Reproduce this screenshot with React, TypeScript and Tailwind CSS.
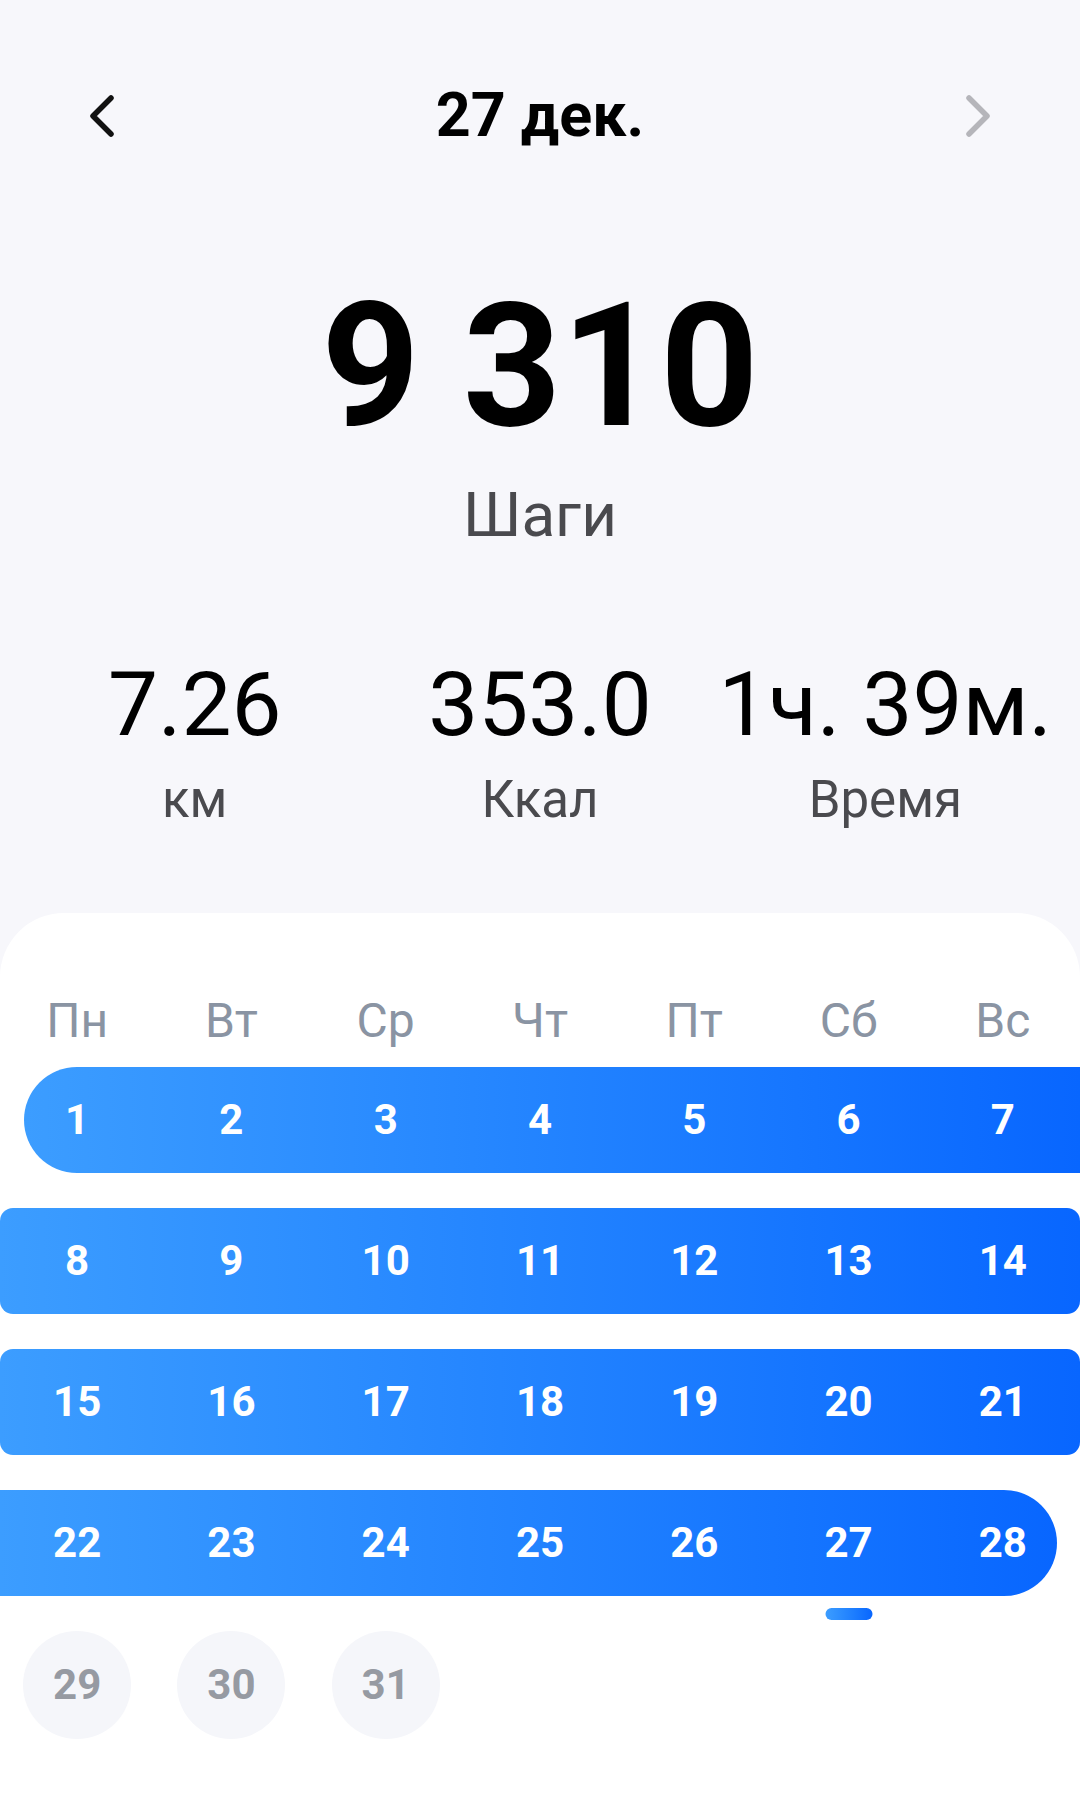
import React from "react";

const font = { fontFamily: "Roboto, 'Noto Sans', sans-serif" };

function Chevron({ dir, color }: { dir: "left" | "right"; color: string }) {
  return (
    <svg width="30" height="46" viewBox="0 0 30 46" fill="none">
      {dir === "left" ? (
        <path d="M24 5 L6 23 L24 41" stroke={color} strokeWidth="5.5" strokeLinecap="round" strokeLinejoin="round" />
      ) : (
        <path d="M6 5 L24 23 L6 41" stroke={color} strokeWidth="5.5" strokeLinecap="round" strokeLinejoin="round" />
      )}
    </svg>
  );
}

const weekdays = ["Пн", "Вт", "Ср", "Чт", "Пт", "Сб", "Вс"];

function Row({ days, variant }: { days: number[]; variant: "first" | "mid" | "last" }) {
  const barClass =
    variant === "first"
      ? "ml-[24px] rounded-l-full rounded-r-[13px]"
      : variant === "last"
      ? "mr-[23px] rounded-r-full rounded-l-[13px]"
      : "rounded-[13px]";
  return (
    <div className="grid grid-cols-7 h-[106px]">
      <div
        className={`col-span-7 col-start-1 row-start-1 bg-linear-to-r from-[#3c9dff] to-[#0866ff] ${barClass}`}
      />
      {days.map((d, i) => (
        <div
          key={d}
          className="row-start-1 relative flex items-center justify-center text-white font-bold text-[42px] leading-none"
          style={{ gridColumnStart: i + 1 }}
        >
          {d}
          {d === 27 && (
            <div className="absolute left-1/2 -translate-x-1/2 top-[118px] w-[47px] h-[12px] rounded-full bg-linear-to-r from-[#3c9dff] to-[#0866ff]" />
          )}
        </div>
      ))}
    </div>
  );
}

export default function App() {
  return (
    <div className="w-[1080px] h-[1803px] bg-[#f7f7fb] flex flex-col overflow-hidden" style={font}>
      {/* Header */}
      <div className="flex items-center justify-between pl-[87px] pr-[87px] pt-[91px] h-[140px]">
        <Chevron dir="left" color="#111111" />
        <div className="text-[61px] font-bold text-black leading-none -mt-[1px]">27 дек.</div>
        <Chevron dir="right" color="#b5b5ba" />
      </div>

      {/* Steps */}
      <div className="flex flex-col items-center mt-[140px]">
        <div className="text-[172px] font-bold text-black leading-none">9 310</div>
        <div className="text-[62px] text-[#4a4a4e] leading-none mt-[32px]">Шаги</div>
      </div>

      {/* Stats */}
      <div className="grid grid-cols-3 px-[22px] mt-[114px]">
        {[
          ["7.26", "км"],
          ["353.0", "Ккал"],
          ["1ч. 39м.", "Время"],
        ].map(([v, l]) => (
          <div key={l} className="flex flex-col items-center">
            <div className="text-[89px] text-black leading-none whitespace-nowrap">{v}</div>
            <div className="text-[51px] text-[#4a4a4e] leading-none mt-[25px]">{l}</div>
          </div>
        ))}
      </div>

      {/* Calendar card */}
      <div className="mt-[88px] flex-1 bg-white rounded-t-[64px] pt-[84px]">
        <div className="grid grid-cols-7">
          {weekdays.map((w) => (
            <div key={w} className="text-center text-[48px] text-[#8a94a3] leading-none">
              {w}
            </div>
          ))}
        </div>
        <div className="flex flex-col gap-[35px] mt-[22px]">
          <Row days={[1, 2, 3, 4, 5, 6, 7]} variant="first" />
          <Row days={[8, 9, 10, 11, 12, 13, 14]} variant="mid" />
          <Row days={[15, 16, 17, 18, 19, 20, 21]} variant="mid" />
          <Row days={[22, 23, 24, 25, 26, 27, 28]} variant="last" />
          <div className="grid grid-cols-7 h-[108px]">
            {[29, 30, 31].map((d) => (
              <div key={d} className="flex items-center justify-center">
                <div className="w-[108px] h-[108px] rounded-full bg-[#f5f6fa] flex items-center justify-center text-[#969aa2] font-bold text-[42px] leading-none">
                  {d}
                </div>
              </div>
            ))}
          </div>
        </div>
      </div>
    </div>
  );
}
